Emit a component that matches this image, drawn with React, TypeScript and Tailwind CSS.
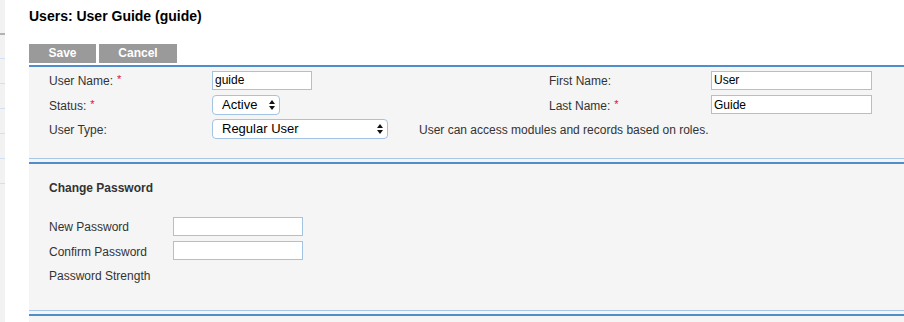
import React from 'react';

function Arrows() {
    return (
        <svg width="6" height="11" viewBox="0 0 6 11" className="absolute right-[5px] top-1/2 -translate-y-1/2 pointer-events-none">
            <polygon points="0,4.5 3,0.5 6,4.5" fill="#111" />
            <polygon points="0,6.5 3,10.5 6,6.5" fill="#111" />
        </svg>
    );
}

function Select({ value, width }: { value: string; width: string }) {
    return (
        <div className={`relative h-[20px] ${width}`}>
            <select
                defaultValue={value}
                className="appearance-none block w-full h-full bg-white border border-[#a3c3e3] rounded-[4px] pl-[9px] pr-[16px] text-[13px] text-black outline-none leading-[18px]"
            >
                <option>{value}</option>
            </select>
            <Arrows />
        </div>
    );
}

function Field({ value, width }: { value?: string; width: string }) {
    return (
        <input
            type="text"
            defaultValue={value}
            className={`block h-[19px] ${width} bg-white border border-[#a3c3e3] px-[2px] text-[12px] text-black outline-none`}
        />
    );
}

function Label({ text, required }: { text: string; required?: boolean }) {
    return (
        <div className="flex items-center h-[20px] pt-[2px] text-[12px] text-[#333] whitespace-nowrap">
            {text}
            {required && <span className="text-[#d11] ml-[4px] text-[11px] -mt-[3px]">*</span>}
        </div>
    );
}

export default function App() {
    return (
        <div className="flex w-[904px] h-[322px] overflow-hidden bg-white" style={{ fontFamily: '"Liberation Sans", Arial, sans-serif' }}>
            {/* sidebar edge */}
            <div className="w-[5px] shrink-0 bg-[#f2f2f2] flex flex-col">
                <div className="h-[33px]" />
                <div className="h-[2px] bg-[#b3b3b3]" />
                <div className="h-[24px] border-b border-[#cfe0f0]" />
                <div className="h-[25px] border-b border-[#cfe0f0]" />
                <div className="h-[25px] border-b border-[#cfe0f0]" />
                <div className="h-[25px] border-b border-[#cfe0f0]" />
                <div className="h-[25px] border-b border-[#cfe0f0]" />
                <div className="h-[25px] border-b border-[#cfe0f0]" />
            </div>

            <div className="w-[24px] shrink-0" />

            <div className="flex-1 flex flex-col">
                <h1 className="text-[14px] font-bold text-black leading-[16px] mt-[8px]">Users: User Guide (guide)</h1>

                <div className="flex gap-[3px] mt-[20px]">
                    <button className="w-[67px] h-[19px] bg-[#9a9a9a] text-white text-[12px] font-bold leading-[19px]">Save</button>
                    <button className="w-[78px] h-[19px] bg-[#9a9a9a] text-white text-[12px] font-bold leading-[19px]">Cancel</button>
                </div>

                <div className="mt-[2px] flex-1 bg-[#f5f5f5] flex flex-col">
                    {/* user details */}
                    <div className="h-[94px] border-t-2 border-[#4f8dcd] border-b border-b-[#a9c7e2] pl-[20px] pt-[3px]">
                        <div className="grid grid-cols-[163px_337px_162px_1fr] gap-y-[4.5px] items-center">
                            <Label text="User Name:" required />
                            <div className="flex"><Field value="guide" width="w-[100px]" /></div>
                            <Label text="First Name:" />
                            <div className="flex"><Field value="User" width="w-[161px]" /></div>

                            <Label text="Status:" required />
                            <div className="flex"><Select value="Active" width="w-[68px]" /></div>
                            <Label text="Last Name:" required />
                            <div className="flex"><Field value="Guide" width="w-[161px]" /></div>

                            <Label text="User Type:" />
                            <div className="col-span-3 flex items-center gap-[31px]">
                                <Select value="Regular User" width="w-[176px]" />
                                <span className="pt-[2px] text-[12px] text-[#333] whitespace-nowrap">User can access modules and records based on roles.</span>
                            </div>
                        </div>
                    </div>

                    {/* change password */}
                    <div className="mt-[3px] h-[149px] border-t-2 border-[#4f8dcd] border-b border-b-[#a9c7e2] pl-[20px] pt-[17px]">
                        <h2 className="text-[12px] font-bold text-[#333] leading-[14px]">Change Password</h2>
                        <div className="mt-[21px] grid grid-cols-[124px_1fr] gap-y-[4.5px] items-center">
                            <Label text="New Password" />
                            <div className="flex"><Field width="w-[130px]" /></div>
                            <Label text="Confirm Password" />
                            <div className="flex"><Field width="w-[130px]" /></div>
                            <Label text="Password Strength" />
                        </div>
                    </div>

                    <div className="mt-[3px] border-t-2 border-[#4f8dcd]" />
                </div>
            </div>
        </div>
    );
}
